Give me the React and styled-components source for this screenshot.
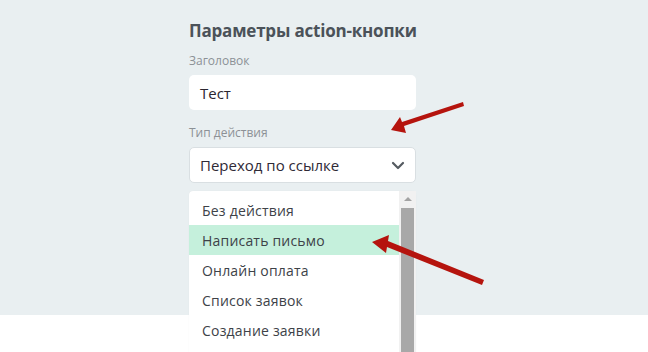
import React from "react";
import styled, { createGlobalStyle } from "styled-components";

const Global = createGlobalStyle`
  html, body { margin: 0; padding: 0; background: #ffffff; }
  body { font-family: "Open Sans", "Noto Sans", sans-serif; overflow: hidden; }
  * { box-sizing: border-box; }
`;

const Page = styled.div`
  position: relative;
  width: 648px;
  height: 352px;
  overflow: hidden;
  background: #ffffff;
`;

const Panel = styled.div`
  height: 315px;
  background: #e9eff1;
  padding: 19px 0 0 189px;
`;

const Form = styled.div`
  position: relative;
  width: 227px;
  display: flex;
  flex-direction: column;
`;

const Title = styled.h2`
  margin: 0 0 10px;
  font-size: 17px;
  line-height: 24px;
  font-weight: 700;
  letter-spacing: -0.2px;
  color: #4b5259;
  white-space: nowrap;
`;

const Label = styled.div`
  font-size: 12px;
  line-height: 16px;
  color: #8c9196;
  margin-bottom: 6px;
`;

const Field = styled.div`
  display: flex;
  flex-direction: column;
  margin-bottom: ${(p) => p.$gap || 0}px;
`;

const Input = styled.div`
  height: 35px;
  background: #ffffff;
  border-radius: 5px;
  padding: 0 11px;
  display: flex;
  align-items: center;
  font-size: 15px;
  color: #2b2630;
`;

const Select = styled(Input)`
  height: 36px;
  border: 1px solid #d9dfe2;
  justify-content: space-between;
  padding: 0 10px 0 10px;
  color: #2f2a36;
`;

const Menu = styled.div`
  position: absolute;
  left: 0;
  top: 172px;
  width: 227px;
  height: 200px;
  background: #ffffff;
  border-radius: 4px 4px 0 0;
  display: flex;
  box-shadow: 0 0 1px rgba(0, 0, 0, 0.08);
`;

const Items = styled.div`
  flex: 1;
  padding-top: 4px;
  display: flex;
  flex-direction: column;
`;

const Item = styled.div`
  height: 30px;
  padding-left: 13px;
  display: flex;
  align-items: center;
  font-size: 14px;
  letter-spacing: 0.2px;
  color: #3d4248;
  background: ${(p) => (p.$active ? "#c5f0dc" : "transparent")};
`;

const Track = styled.div`
  width: 17px;
  background: #f1f1f1;
  display: flex;
  flex-direction: column;
  align-items: center;
  padding-top: 6px;
`;

const UpArrow = styled.div`
  width: 0;
  height: 0;
  border-left: 4px solid transparent;
  border-right: 4px solid transparent;
  border-bottom: 4px solid #a3a3a3;
  margin-bottom: 7px;
`;

const Thumb = styled.div`
  width: 13px;
  flex: 1;
  background: #a8a8a8;
`;

const Arrows = styled.svg`
  position: absolute;
  left: 0;
  top: 0;
  pointer-events: none;
`;

const items = [
  "Без действия",
  "Написать письмо",
  "Онлайн оплата",
  "Список заявок",
  "Создание заявки",
];

export default function App() {
  return (
    <Page>
      <Global />
      <Panel>
        <Form>
          <Title>Параметры action-кнопки</Title>
          <Field $gap={15}>
            <Label>Заголовок</Label>
            <Input>Тест</Input>
          </Field>
          <Field>
            <Label>Тип действия</Label>
            <Select>
              <span>Переход по ссылке</span>
              <svg width="14" height="9" viewBox="0 0 14 9">
                <path d="M2 2 L7 7 L12 2" fill="none" stroke="#555b61" strokeWidth="2.2" strokeLinecap="round" strokeLinejoin="round" />
              </svg>
            </Select>
          </Field>
          <Menu>
            <Items>
              {items.map((t, i) => (
                <Item key={t} $active={i === 1}>{t}</Item>
              ))}
            </Items>
            <Track>
              <UpArrow />
              <Thumb />
            </Track>
          </Menu>
        </Form>
      </Panel>
      <Arrows width="648" height="352" viewBox="0 0 648 352">
        <polygon points="463,102 464,106 404,126 406,133 391,130 400,117 402,122" fill="#b5140e" />
        <polygon points="484,280 482,285 387,247 386,253 372,242 389,235 388,241" fill="#b5140e" />
      </Arrows>
    </Page>
  );
}
